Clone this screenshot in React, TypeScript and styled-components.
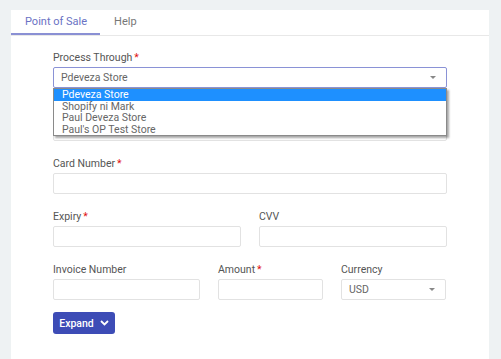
import React from "react";
import styled, { createGlobalStyle } from "styled-components";

const Global = createGlobalStyle`
  html, body { margin: 0; padding: 0; background: #eef2f3; }
  body { font-family: Roboto, "Noto Sans", "Liberation Sans", sans-serif; }
  * { box-sizing: border-box; }
`;

const Page = styled.div`
  padding: 10px 12px 0 11px;
  height: 359px;
  overflow: hidden;
`;

const Card = styled.div`
  background: #fff;
  height: 349px;
`;

const TabBar = styled.div`
  display: flex;
  height: 26px;
  border-bottom: 1px solid #e8e8e8;
`;

const Tab = styled.div<{ $active?: boolean }>`
  padding: 0 13px 0 14px;
  font-size: 11px;
  line-height: 24px;
  color: ${(p) => (p.$active ? "#6a72c4" : "#777")};
  border-bottom: 2px solid ${(p) => (p.$active ? "#8a90d4" : "transparent")};
`;

const Form = styled.div`
  padding: 15px 42px 0 42px;
  display: flex;
  flex-direction: column;
`;

const Group = styled.div`
  position: relative;
  display: flex;
  flex-direction: column;
  margin-bottom: 16px;
`;

const Row = styled.div`
  display: grid;
  grid-template-columns: ${(p: { $cols: string }) => p.$cols};
  column-gap: 18px;
`;

const Label = styled.div`
  font-size: 10.5px;
  line-height: 13px;
  height: 13px;
  color: #555;
  margin-bottom: 3px;
  white-space: nowrap;
`;

const Req = styled.span`
  color: #e01010;
  margin-left: 2px;
`;

const Input = styled.div<{ $focus?: boolean }>`
  height: 21px;
  border: 1px solid ${(p) => (p.$focus ? "#8a92d6" : "#e2e2e2")};
  border-radius: 2px;
  display: flex;
  align-items: center;
  justify-content: space-between;
  padding: 0 10px 0 7px;
  font-size: 10.5px;
  color: #666;
  background: #fff;
`;

const Arrow = styled.span`
  width: 0;
  height: 0;
  border-left: 3px solid transparent;
  border-right: 3px solid transparent;
  border-top: 3px solid #888;
`;

const DropList = styled.div`
  position: absolute;
  left: 0;
  right: 0;
  top: 37px;
  border: 1px solid #8a8a8a;
  background: #fff;
  box-shadow: 2px 2px 2px rgba(0, 0, 0, 0.35);
  z-index: 2;
`;

const Option = styled.div<{ $sel?: boolean }>`
  height: 11.5px;
  line-height: 11.5px;
  padding-left: 8px;
  font-size: 10.5px;
  color: ${(p) => (p.$sel ? "#fff" : "#666")};
  background: ${(p) => (p.$sel ? "#1e90ff" : "transparent")};
`;

const Button = styled.button`
  align-self: flex-start;
  margin-top: -4px;
  width: 62px;
  height: 22px;
  border: none;
  border-radius: 3px;
  background: #3d4cb6;
  color: #fff;
  font-family: inherit;
  font-size: 10.5px;
  font-weight: 500;
  display: flex;
  align-items: center;
  justify-content: center;
  gap: 6px;
  padding: 0;
`;

const Field = ({
  label,
  req,
  children,
}: {
  label: string;
  req?: boolean;
  children?: React.ReactNode;
}) => (
  <div>
    <Label>
      {label}
      {req && <Req>*</Req>}
    </Label>
    {children ?? <Input />}
  </div>
);

export default function App() {
  return (
    <>
      <Global />
      <Page>
        <Card>
          <TabBar>
            <Tab $active>Point of Sale</Tab>
            <Tab>Help</Tab>
          </TabBar>
          <Form>
            <Group>
              <Label>
                Process Through<Req>*</Req>
              </Label>
              <Input $focus>
                Pdeveza Store
                <Arrow />
              </Input>
              <DropList>
                <Option $sel>Pdeveza Store</Option>
                <Option>Shopify ni Mark</Option>
                <Option>Paul Deveza Store</Option>
                <Option>Paul's OP Test Store</Option>
              </DropList>
            </Group>
            <Group>
              <Label />
              <Input />
            </Group>
            <Group>
              <Field label="Card Number" req />
            </Group>
            <Group>
              <Row $cols="1fr 1fr">
                <Field label="Expiry" req />
                <Field label="CVV" />
              </Row>
            </Group>
            <Group>
              <Row $cols="147px 105px 105px">
                <Field label="Invoice Number" />
                <Field label="Amount" req />
                <Field label="Currency">
                  <Input>
                    USD
                    <Arrow />
                  </Input>
                </Field>
              </Row>
            </Group>
            <Button>
              Expand
              <svg width="9" height="6" viewBox="0 0 9 6">
                <path d="M1 1l3.5 3.5L8 1" fill="none" stroke="#fff" strokeWidth="1.8" />
              </svg>
            </Button>
          </Form>
        </Card>
      </Page>
    </>
  );
}
